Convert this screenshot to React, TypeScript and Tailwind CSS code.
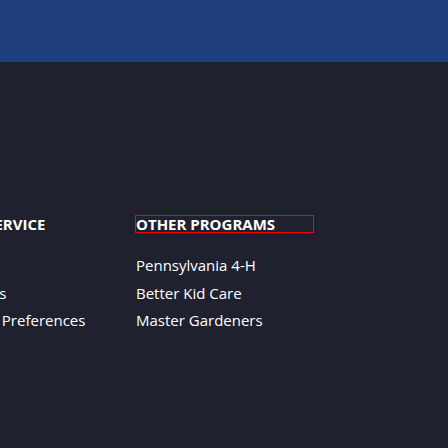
import React from "react";

const font = { fontFamily: '"Open Sans", "Noto Sans", sans-serif' };

export default function App() {
  return (
    <div className="w-[448px] h-[448px] overflow-hidden bg-[#20212f] text-white" style={font}>
      <div className="h-[62px] bg-[#1f407c]" />
      <div className="flex ml-[-100px] pt-[154px]">
        <div className="w-[236px] shrink-0">
          <h3 className="h-[16px] leading-[16px] text-[15px] font-bold">CUSTOMER SERVICE</h3>
          <ul className="mt-[20px] text-[15px] leading-[27.5px]">
            <li>Help Center</li>
            <li>Online Courses</li>
            <li>Manage Email Preferences</li>
          </ul>
        </div>
        <div className="w-[177px] shrink-0">
          <h3 className="h-[16px] leading-[16px] text-[15px] font-bold outline outline-1 outline-[#ff0000]">OTHER PROGRAMS</h3>
          <ul className="mt-[20px] text-[15px] leading-[27.5px]">
            <li>Pennsylvania 4-H</li>
            <li>Better Kid Care</li>
            <li>Master Gardeners</li>
          </ul>
        </div>
      </div>
    </div>
  );
}
